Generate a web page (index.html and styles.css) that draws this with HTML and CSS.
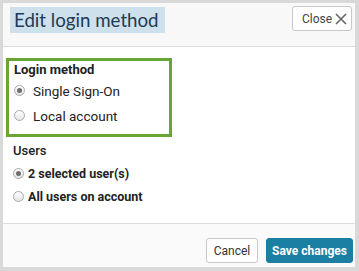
FILE: index.html
```html
<!DOCTYPE html>
<html lang="en">
<head>
    <meta charset="UTF-8">
    <title>Edit login method</title>
    <link rel="stylesheet" href="styles.css">
</head>
<body>
<div class="dialog">
    <div class="dialog-header">
        <h1 class="title">Edit login method</h1>
        <button class="close-btn">
            Close
            <svg width="12" height="12" viewBox="0 0 12 12"><path d="M1 1 L11 11 M11 1 L1 11" stroke="#666" stroke-width="1.6"/></svg>
        </button>
    </div>
    <div class="dialog-body">
        <div class="group group-login">
            <div class="group-label">Login method</div>
            <label class="radio"><span class="dot checked"></span>Single Sign-On</label>
            <label class="radio"><span class="dot"></span>Local account</label>
        </div>
        <div class="group group-users">
            <div class="group-label">Users</div>
            <label class="radio bold"><span class="dot checked"></span>2 selected user(s)</label>
            <label class="radio bold"><span class="dot"></span>All users on account</label>
        </div>
    </div>
    <div class="dialog-footer">
        <button class="btn btn-cancel">Cancel</button>
        <button class="btn btn-primary">Save changes</button>
    </div>
</div>
</body>
</html>
```
FILE: styles.css
```css
body, html {
    margin: 0;
    padding: 0;
    width: 100%;
    height: 100%;
    background-color: #d9d9d9;
    font-family: Roboto, "Liberation Sans", sans-serif;
    overflow: hidden;
}

body {
    padding: 3px 4px 4px 3px;
    box-sizing: border-box;
}

.dialog {
    width: 352px;
    height: 264px;
    background: #fff;
    display: flex;
    flex-direction: column;
}

.dialog-header {
    height: 44px;
    flex: none;
    background: #f8f8f8;
    border-bottom: 1px solid #dcdcdc;
    display: flex;
    justify-content: space-between;
    align-items: flex-start;
    padding: 3px 3px 0 7px;
    box-sizing: border-box;
}

.title {
    margin: 1px 0 0;
    font-family: Lato, "Noto Sans", sans-serif;
    font-weight: normal;
    font-size: 18.7px;
    line-height: 26px;
    color: #1e3b55;
    background: #cde0ec;
    padding: 0 6px 0 4px;
}

.close-btn {
    display: flex;
    align-items: center;
    gap: 3px;
    height: 25px;
    width: 60px;
    padding: 0 0 0 9px;
    background: #fff;
    border: 1px solid #c8c8c8;
    border-radius: 3px;
    font-family: Roboto, sans-serif;
    font-size: 12px;
    color: #444;
}

.dialog-body {
    flex: 1;
    padding: 11px 0 0 3px;
}

.group-login {
    width: 155px;
    height: 72px;
    border: 3px solid #68a534;
    padding: 1px 0 0 5px;
    box-sizing: content-box;
}

.group-users {
    padding: 6px 0 0 7px;
}

.group-label {
    font-size: 13px;
    font-weight: bold;
    color: #222;
    line-height: 16px;
}

.group-users .group-label {
    font-weight: 500;
    margin-bottom: 3px;
}

.radio {
    display: flex;
    align-items: center;
    font-size: 13.5px;
    color: #222;
    height: 25px;
}

.group-users .radio {
    height: 23px;
    font-size: 12.5px;
}

.radio.bold {
    font-weight: bold;
}

.dot {
    width: 9px;
    height: 9px;
    border: 1px solid #aaa;
    border-radius: 50%;
    background: linear-gradient(#fff, #e4e4e4);
    margin-right: 8px;
    position: relative;
}

.group-users .dot {
    margin-right: 4px;
}

.dot.checked::after {
    content: "";
    position: absolute;
    left: 2px;
    top: 2px;
    width: 5px;
    height: 5px;
    border-radius: 50%;
    background: #6e6e6e;
}

.dialog-footer {
    height: 44px;
    flex: none;
    border-top: 1px solid #dcdcdc;
    background: #fafafa;
    display: flex;
    justify-content: flex-end;
    align-items: flex-start;
    gap: 8px;
    padding: 14px 2px 0 0;
    box-sizing: border-box;
}

.btn {
    height: 25px;
    padding: 0;
    border: 1px solid #c8c8c8;
    border-radius: 3px;
    background: #fff;
    font-family: Roboto, sans-serif;
    font-size: 12px;
    color: #333;
    white-space: nowrap;
}

.btn-cancel {
    width: 52px;
}

.btn-primary {
    background: #1b7ea3;
    border-color: #1b7ea3;
    color: #fff;
    font-weight: bold;
    width: 87px;
}
```
